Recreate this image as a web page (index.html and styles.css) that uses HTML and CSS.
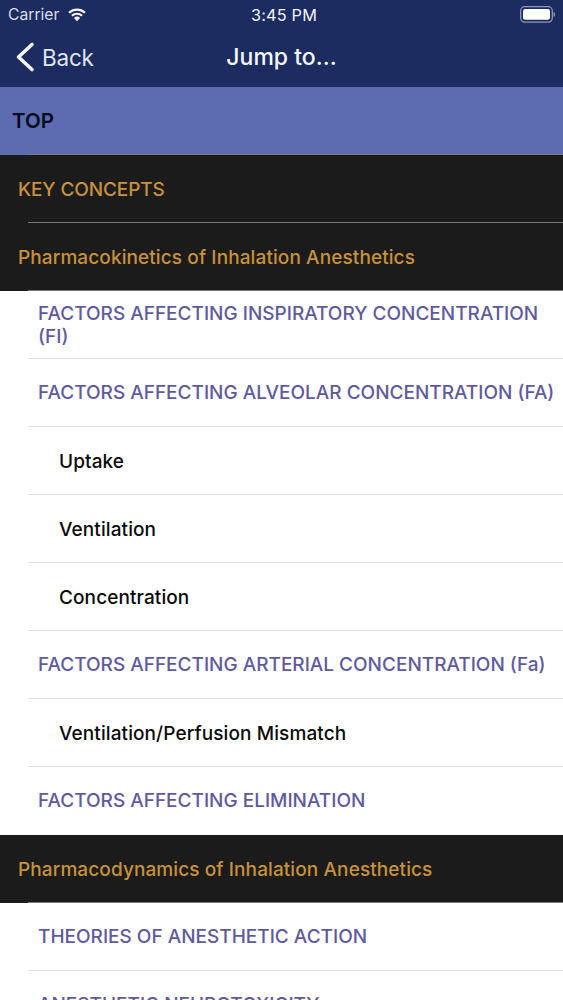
FILE: index.html
```html
<!DOCTYPE html>
<html lang="en">
<head>
<meta charset="utf-8">
<title>Jump to...</title>
<link rel="stylesheet" href="styles.css">
</head>
<body>
<div class="screen">
  <header class="header">
    <div class="status">
      <div class="status-left">
        <span class="carrier">Carrier</span>
        <svg class="wifi" width="20" height="15" viewBox="0 0 20 15"><path d="M10 14.2 6.900 10.900a4.500 4.500 0 0 1 6.200 0Z" fill="#f4f6fb"/><path d="M4.900 8.800a7.400 7.400 0 0 1 10.200 0" fill="none" stroke="#f4f6fb" stroke-width="2.100"/><path d="M2 5.800a11.600 11.600 0 0 1 16 0" fill="none" stroke="#f4f6fb" stroke-width="2.100"/></svg>
      </div>
      <span class="clock">3:45 PM</span>
      <div class="status-right">
        <svg class="battery" width="36" height="17" viewBox="0 0 36 17"><rect x="0.700" y="0.700" width="31.600" height="15.400" rx="4" fill="none" stroke="#8b97bd" stroke-width="1.300"/><rect x="3" y="3" width="27" height="10.800" rx="2.200" fill="#fff"/><path d="M33.500 6v5c1-.3 1.600-1.300 1.600-2.500S34.500 6.300 33.500 6Z" fill="#8b97bd"/></svg>
      </div>
    </div>
    <nav class="nav">
      <div class="back">
        <svg class="chevron" width="20" height="32" viewBox="0 0 20 32"><path d="M17 3.500 3.500 16 17 28.500" fill="none" stroke="#f2f4fa" stroke-width="3.600" stroke-linecap="round" stroke-linejoin="round"/></svg>
        <span>Back</span>
      </div>
      <div class="title">Jump to...</div>
    </nav>
  </header>
  <div class="row-top">TOP</div>
  <div class="row dark caps">KEY CONCEPTS</div>
  <div class="row dark">Pharmacokinetics of Inhalation Anesthetics</div>
  <div class="row link"><div class="inner">FACTORS AFFECTING INSPIRATORY CONCENTRATION (FI)</div></div>
  <div class="row link"><div class="inner">FACTORS AFFECTING ALVEOLAR CONCENTRATION (FA)</div></div>
  <div class="row sub"><div class="inner">Uptake</div></div>
  <div class="row sub"><div class="inner">Ventilation</div></div>
  <div class="row sub"><div class="inner">Concentration</div></div>
  <div class="row link"><div class="inner">FACTORS AFFECTING ARTERIAL CONCENTRATION (Fa)</div></div>
  <div class="row sub"><div class="inner">Ventilation/Perfusion Mismatch</div></div>
  <div class="row link last"><div class="inner">FACTORS AFFECTING ELIMINATION</div></div>
  <div class="row dark">Pharmacodynamics of Inhalation Anesthetics</div>
  <div class="row link"><div class="inner">THEORIES OF ANESTHETIC ACTION</div></div>
  <div class="row link"><div class="inner">ANESTHETIC NEUROTOXICITY</div></div>
</div>
</body>
</html>
```
FILE: styles.css
```css
html, body { margin: 0; padding: 0; }
body { background: #fff; font-family: Inter, "Liberation Sans", sans-serif; }
.screen { width: 563px; height: 1000px; overflow: hidden; }
.header { height: 87px; background: #1c2b60; color: #f2f4fa; }
.status { height: 29px; display: grid; grid-template-columns: 1fr auto 1fr; align-items: center; padding: 0 7px 0 8px; font-size: 15.700px; }
.status-left { display: flex; align-items: center; gap: 8px; }
.status-right { display: flex; justify-content: flex-end; }
.carrier { color: #d9deea; }
.clock { font-size: 16.300px; letter-spacing: 0.2px; margin-left: 4px; }
.wifi, .battery, .chevron { display: block; }
.nav { height: 58px; display: flex; align-items: center; justify-content: center; position: relative; }
.back { position: absolute; left: 15px; top: 12px; display: flex; align-items: center; gap: 7px; font-size: 22.500px; letter-spacing: -0.2px; color: #dfe4f0; }
.title { font-size: 23px; font-weight: 500; color: #f6f7fb; margin-top: -2px; }
.row-top { height: 68px; box-sizing: border-box; background: #5d6bb0; color: #060b20; font-size: 20.500px; font-weight: 600; display: flex; align-items: center; padding-left: 12px; padding-bottom: 1px; position: relative; }
.row { font-size: 19px; font-weight: 500; }
.dark { height: 68px; box-sizing: border-box; background: #1b1b1b; color: #c8923a; display: flex; align-items: center; padding-left: 18px; position: relative; letter-spacing: 0.1px; }
.caps { letter-spacing: -0.1px; }
.row-top::after, .dark::after { content: ""; position: absolute; left: 28px; right: 0; bottom: 0; height: 1px; background: #77777c; }
.link, .sub { padding-left: 28px; }
.inner { height: 68px; box-sizing: border-box; display: flex; align-items: center; border-bottom: 1px solid #e4e4e4; }
.link { color: #5f5a9f; }
.link .inner { padding: 0 5px 0 10px; line-height: 23px; }
.sub { color: #0a0a0a; letter-spacing: 0.1px; }
.sub .inner { padding: 1px 0 0 31px; }
.last .inner { border-bottom: 0; padding-bottom: 1px; }
```
